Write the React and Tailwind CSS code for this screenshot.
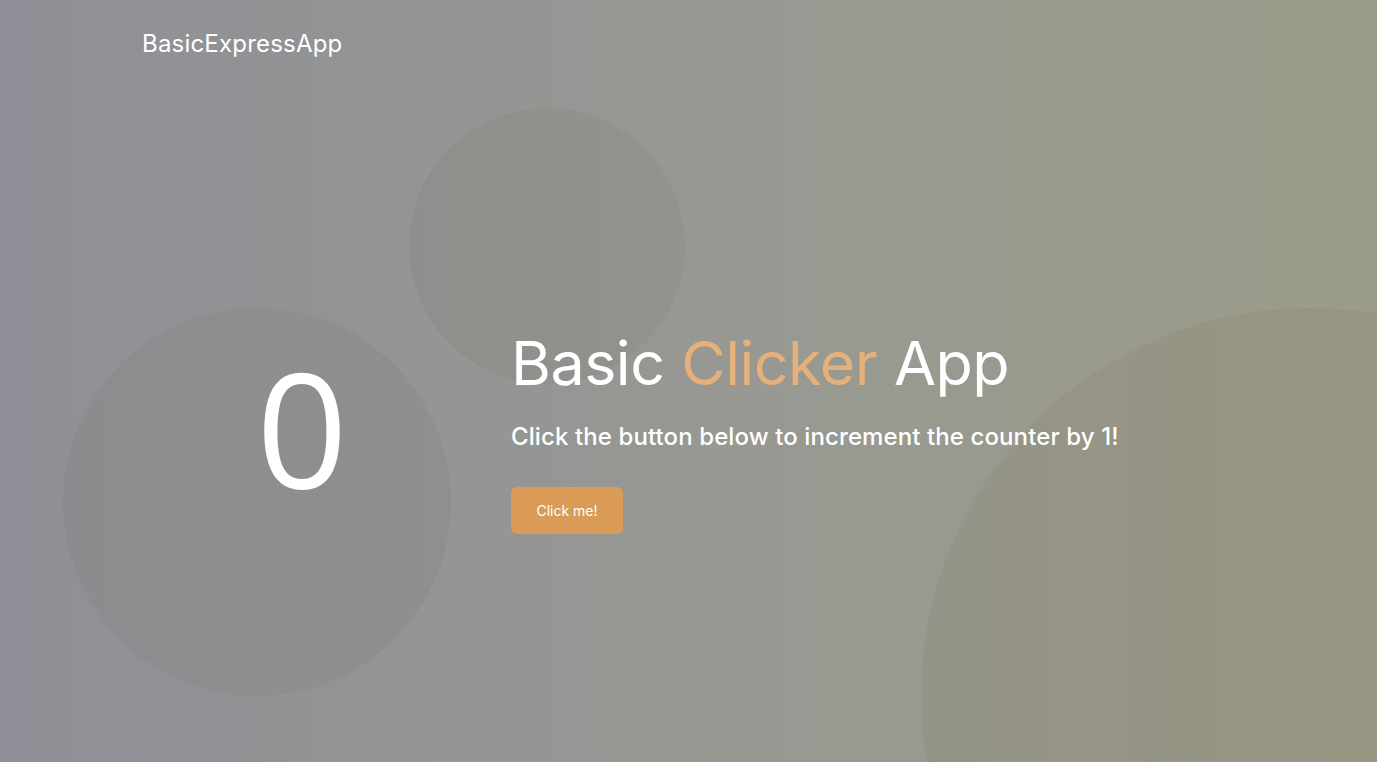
import React, { useState } from 'react'

const App = () => {
  const [count, setCount] = useState(0)

  return (
    <div className="relative w-full h-[762px] overflow-hidden bg-gradient-to-r from-[#8f8f97] via-[#979893] to-[#9b9c88] text-white font-['Inter','Open_Sans',sans-serif]">
      {/* background bubbles */}
      <div className="absolute left-[63px] top-[308px] w-[388px] h-[388px] rounded-full bg-[rgba(115,100,75,0.1)]" />
      <div className="absolute left-[409px] top-[108px] w-[276px] h-[276px] rounded-full bg-[rgba(115,100,75,0.1)]" />
      <div className="absolute left-[921px] top-[308px] w-[778px] h-[778px] rounded-full bg-[rgba(115,100,75,0.1)]" />

      <div className="relative flex flex-col h-full">
        <header className="h-[88px] flex items-center px-[142px]">
          <span className="text-[24px] tracking-[0.2px]">BasicExpressApp</span>
        </header>

        <main className="flex-1 flex items-center px-[142px]">
          <div className="w-[320px] flex justify-center mt-[2px]">
            <span className="text-[160px] font-normal leading-none font-['Open_Sans',sans-serif]">{count}</span>
          </div>
          <div className="ml-[49px] pt-[16px] flex flex-col items-start">
            <h1 className="text-[61px] font-normal leading-none tracking-[-0.5px]">
              Basic <span className="text-[#e5b07a]">Clicker</span> App
            </h1>
            <p className="mt-[26px] text-[24px] leading-[34px] font-medium tracking-[0.1px]">
              Click the button below to increment the counter by 1!
            </p>
            <button
              type="button"
              onClick={() => setCount(count + 1)}
              className="mt-[33px] w-[112px] h-[47px] rounded-md bg-[#d99b55] text-[14px] text-white"
            >
              Click me!
            </button>
          </div>
        </main>
      </div>
    </div>
  )
}

export default App
